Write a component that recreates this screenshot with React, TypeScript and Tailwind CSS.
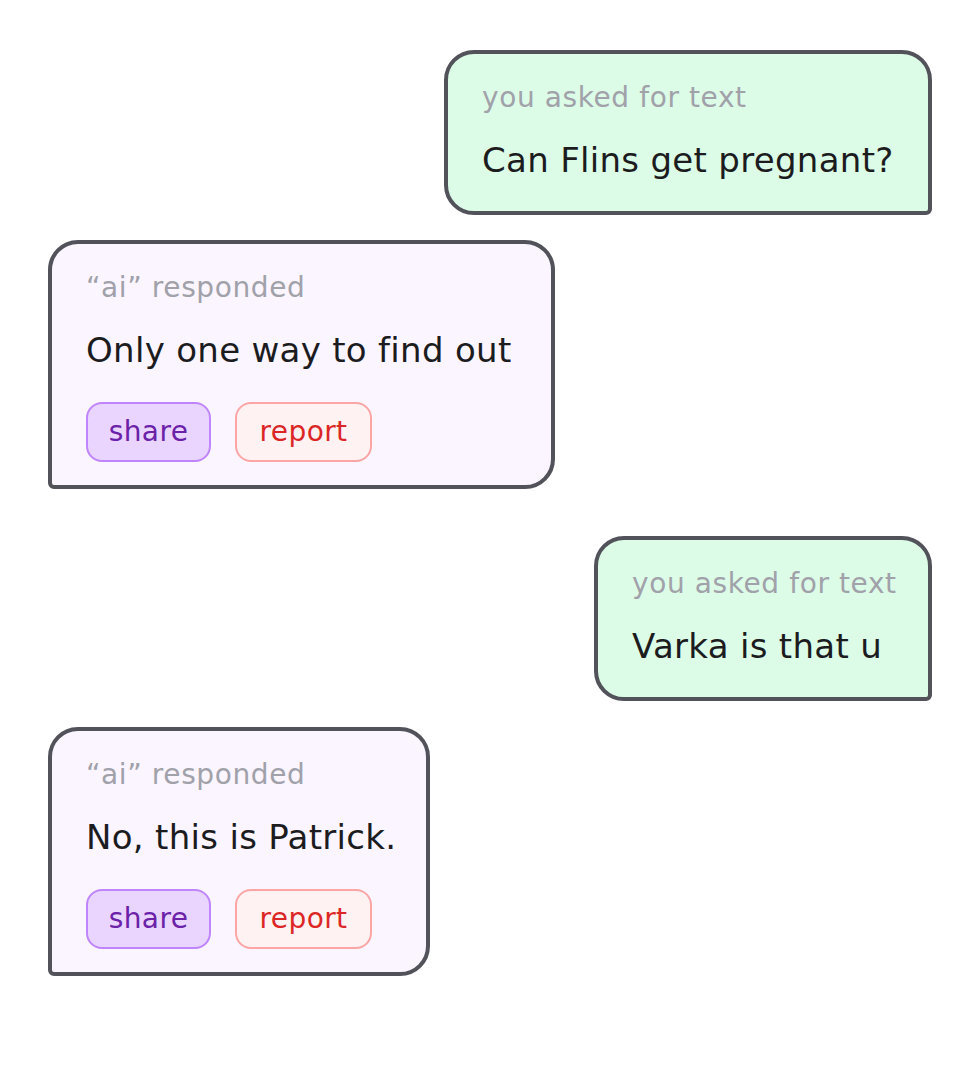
import React from "react";

type Message = {
  from: "user" | "ai";
  text: string;
  width: string;
  gap: string;
};

const messages: Message[] = [
  { from: "user", text: "Can Flins get pregnant?", width: "w-[488px]", gap: "" },
  { from: "ai", text: "Only one way to find out", width: "w-[507px]", gap: "mt-[25px]" },
  { from: "user", text: "Varka is that u", width: "w-[338px]", gap: "mt-[47px]" },
  { from: "ai", text: "No, this is Patrick.", width: "w-[382px]", gap: "mt-[26px]" },
];

function Bubble({ msg }: { msg: Message }) {
  const isUser = msg.from === "user";

  return (
    <div
      className={`${msg.width} ${msg.gap} border-4 border-[#52525b] pl-[34px] pr-8 pt-6 ${
        isUser
          ? "self-end rounded-[30px] rounded-br-md bg-[#dcfce7] pb-[27px]"
          : "self-start rounded-[30px] rounded-bl-md bg-[#faf5ff] pb-[23px]"
      }`}
    >
      <div className="text-[28px] leading-[40px] tracking-[0.6px] text-[#a1a1aa] whitespace-nowrap">
        {isUser ? "you asked for text" : "\u201cai\u201d responded"}
      </div>
      <p className="mt-[18px] text-[34px] leading-[48px] tracking-[0.3px] text-[#1c1c1f] whitespace-nowrap">
        {msg.text}
      </p>

      {/* Actions only under ai replies */}
      {!isUser && (
        <div className="mt-7 flex gap-6">
          <button className="flex h-[60px] w-[125px] items-center justify-center rounded-2xl border-2 border-[#c084fc] bg-[#e9d5ff] text-[28px] tracking-[0.4px] text-[#6b21a8]">
            share
          </button>
          <button className="flex h-[60px] w-[137px] items-center justify-center rounded-2xl border-2 border-[#fca5a5] bg-[#fef2f2] text-[28px] tracking-[0.4px] text-[#dc2626]">
            report
          </button>
        </div>
      )}
    </div>
  );
}

export default function App() {
  return (
    <div className="min-h-screen bg-white font-['DejaVu_Sans',sans-serif]">
      <div className="flex flex-col pl-12 pr-[43px] pt-[50px]">
        {messages.map((msg, i) => (
          <Bubble key={i} msg={msg} />
        ))}
      </div>
    </div>
  );
}
